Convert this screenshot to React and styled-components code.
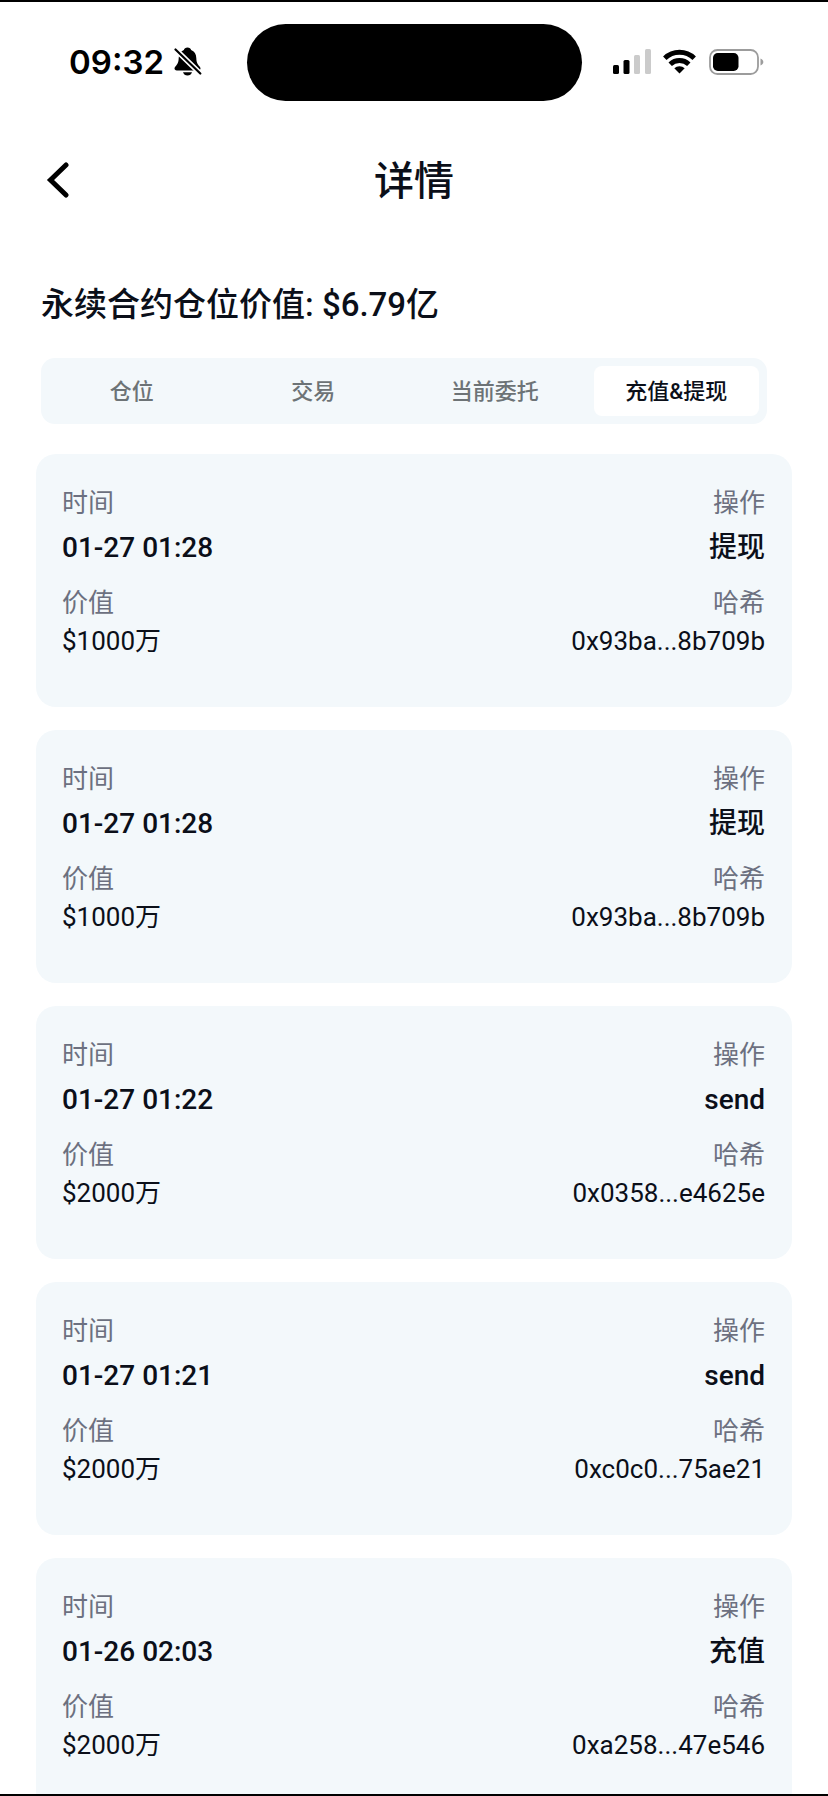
import React, { useState } from "react";
import styled, { createGlobalStyle } from "styled-components";

const GlobalStyle = createGlobalStyle`
  :root {
    --ink: #0b0f19;
    --muted: #6c7080;
    --panel: #f3f8fb;
    --white: #ffffff;
  }

  * {
    box-sizing: border-box;
  }

  body {
    margin: 0;
    background: var(--white);
    color: var(--ink);
    font-family: Roboto, "Noto Sans CJK SC", sans-serif;
  }
`;

const Screen = styled.div`
  display: flex;
  flex-direction: column;
  height: 100vh;
  overflow: hidden;
  border-top: 2px solid #000;
  border-bottom: 2px solid #000;
`;

const StatusBar = styled.div`
  display: grid;
  grid-template-columns: 1fr 335px 1fr;
  align-items: center;
  flex-shrink: 0;
  padding: 22px 0 24px;
`;

const StatusLeft = styled.div`
  display: flex;
  align-items: center;
  gap: 10px;
  padding: 0 0 2px 69px;
`;

const StatusRight = styled.div`
  display: flex;
  align-items: center;
  gap: 12px;
  padding: 0 0 2px 31px;
`;

const Clock = styled.time`
  font-family: Inter, sans-serif;
  font-size: 33px;
  font-weight: 600;
  line-height: 40px;
  color: #000;
`;

const Island = styled.div`
  height: 77px;
  border-radius: 40px;
  background: #000;
`;

const Header = styled.header`
  display: grid;
  grid-template-columns: 60px 1fr 60px;
  align-items: center;
  flex-shrink: 0;
  height: 110px;
  padding: 0 36px;
`;

const BackButton = styled.button`
  display: flex;
  align-items: center;
  height: 60px;
  padding: 0 10px;
  border: none;
  background: none;
  color: #000;
  cursor: pointer;
`;

const Title = styled.h1`
  margin: 0;
  padding-top: 4px;
  text-align: center;
  font-size: 40px;
  font-weight: 500;
  line-height: 60px;
`;

const Content = styled.main`
  padding: 46px 36px 0;
`;

const Summary = styled.h2`
  margin: 0 0 29px 5px;
  font-size: 33px;
  font-weight: 500;
  line-height: 48px;
`;

const Tabs = styled.div`
  display: grid;
  grid-template-columns: repeat(4, 1fr);
  height: 66px;
  margin: 0 25px 30px 5px;
  border-radius: 14px;
  background: var(--panel);
`;

const Tab = styled.button`
  margin: 8px;
  padding: 2px 0 0;
  border: none;
  border-radius: 8px;
  background: ${({ $active }) => ($active ? "var(--white)" : "transparent")};
  color: ${({ $active }) => ($active ? "var(--ink)" : "#6d7376")};
  font-family: inherit;
  font-size: 22px;
  font-weight: 500;
  line-height: 32px;
  white-space: nowrap;
  cursor: pointer;
`;

const RecordList = styled.div`
  display: flex;
  flex-direction: column;
  gap: 23px;
`;

const Card = styled.dl`
  display: grid;
  grid-template-columns: 1fr 1fr;
  row-gap: 10px;
  margin: 0;
  padding: 31px 27px 46px 26px;
  border-radius: 20px;
  background: var(--panel);
`;

const Field = styled.div`
  text-align: ${({ $end }) => ($end ? "right" : "left")};
`;

const Label = styled.dt`
  color: var(--muted);
  font-size: 26px;
  line-height: 36px;
`;

const Value = styled.dd`
  margin: 0;
  font-size: ${({ $strong }) => ($strong ? 28 : 26)}px;
  font-weight: ${({ $strong }) => ($strong ? 500 : 400)};
  line-height: ${({ $strong }) => ($strong ? 54 : 40)}px;
`;

const tabs = ["仓位", "交易", "当前委托", "充值&提现"];

const records = [
  { id: 1, time: "01-27 01:28", action: "提现", value: "$1000万", hash: "0x93ba...8b709b" },
  { id: 2, time: "01-27 01:28", action: "提现", value: "$1000万", hash: "0x93ba...8b709b" },
  { id: 3, time: "01-27 01:22", action: "send", value: "$2000万", hash: "0x0358...e4625e" },
  { id: 4, time: "01-27 01:21", action: "send", value: "$2000万", hash: "0xc0c0...75ae21" },
  { id: 5, time: "01-26 02:03", action: "充值", value: "$2000万", hash: "0xa258...47e546" },
];

const BellOffIcon = () => (
  <svg width="28" height="29" viewBox="0 0 28 29" aria-hidden="true">
    <path
      d="M13.500 0.500c-2 0-3.300 1-3.600 2.500C6.500 4.300 4.800 7.200 4.700 11c-.1 4.500-1.200 6.200-3.300 8.500-1.600 1.800-1 3.900 1.400 3.900h21.400c2.400 0 3-2.100 1.400-3.900-2.100-2.300-3.200-4-3.300-8.500-.1-3.800-1.800-6.700-5.200-8C16.800 1.500 15.500.5 13.500.5Z"
      fill="#000"
    />
    <path d="M9 25.200h9c-.6 2-2.300 3.300-4.500 3.300S9.600 27.200 9 25.200Z" fill="#000" />
    <path d="M1.500 2.500 26.300 26.500" stroke="#fff" strokeWidth="5.400" strokeLinecap="round" />
    <path d="M1.500 2.500 26.300 26.500" stroke="#000" strokeWidth="2.200" strokeLinecap="round" />
  </svg>
);

const SignalIcon = () => (
  <svg width="38" height="25" viewBox="0 0 38 25" aria-hidden="true">
    <rect x="0" y="16" width="6" height="9" rx="1.500" fill="#000" />
    <rect x="10.500" y="11" width="6" height="14" rx="1.500" fill="#000" />
    <rect x="21" y="6" width="6" height="19" rx="1.500" fill="#cbcbcb" />
    <rect x="32" y="0" width="6" height="25" rx="1.500" fill="#cbcbcb" />
  </svg>
);

const WifiIcon = () => (
  <svg width="34" height="25" viewBox="0 0 34 25" aria-hidden="true">
    <g fill="none" stroke="#000" strokeWidth="4.900">
      <path d="M1.800 9.300a21 21 0 0 1 29.400 0" />
      <path d="M7.200 15.200a13.400 13.400 0 0 1 18.600 0" />
    </g>
    <path d="M16.500 24.500 11.300 19.300a7.600 7.600 0 0 1 10.400 0Z" fill="#000" />
  </svg>
);

const BatteryIcon = () => (
  <svg width="55" height="26" viewBox="0 0 55 26" aria-hidden="true">
    <rect x="1" y="1" width="48" height="24" rx="7.500" fill="none" stroke="#9c9c9c" strokeWidth="1.800" />
    <rect x="4" y="4" width="25.500" height="18" rx="4.800" fill="#000" />
    <path d="M51.500 9.500c2 .7 2.800 2 2.800 3.500s-.8 2.800-2.800 3.500Z" fill="#9c9c9c" />
  </svg>
);

const BackIcon = () => (
  <svg width="24" height="36" viewBox="0 0 24 36" aria-hidden="true">
    <path
      d="M20 3 4.500 18 20 33"
      fill="none"
      stroke="currentColor"
      strokeWidth="5"
      strokeLinecap="round"
      strokeLinejoin="miter"
    />
  </svg>
);

const Record = ({ record }) => {
  return (
    <Card>
      <Field>
        <Label>时间</Label>
        <Value $strong>{record.time}</Value>
      </Field>
      <Field $end>
        <Label>操作</Label>
        <Value $strong>{record.action}</Value>
      </Field>
      <Field>
        <Label>价值</Label>
        <Value>{record.value}</Value>
      </Field>
      <Field $end>
        <Label>哈希</Label>
        <Value>{record.hash}</Value>
      </Field>
    </Card>
  );
};

const App = () => {
  const [active, setActive] = useState(3);

  return (
    <Screen>
      <GlobalStyle />
      <StatusBar>
        <StatusLeft>
          <Clock>09:32</Clock>
          <BellOffIcon />
        </StatusLeft>
        <Island />
        <StatusRight>
          <SignalIcon />
          <WifiIcon />
          <BatteryIcon />
        </StatusRight>
      </StatusBar>
      <Header>
        <BackButton aria-label="返回">
          <BackIcon />
        </BackButton>
        <Title>详情</Title>
      </Header>
      <Content>
        <Summary>永续合约仓位价值: $6.79亿</Summary>
        <Tabs role="tablist">
          {tabs.map((name, i) => (
            <Tab
              key={name}
              role="tab"
              aria-selected={active === i}
              $active={active === i}
              onClick={() => setActive(i)}
            >
              {name}
            </Tab>
          ))}
        </Tabs>
        <RecordList>
          {records.map((record) => (
            <Record key={record.id} record={record} />
          ))}
        </RecordList>
      </Content>
    </Screen>
  );
};

export default App;
